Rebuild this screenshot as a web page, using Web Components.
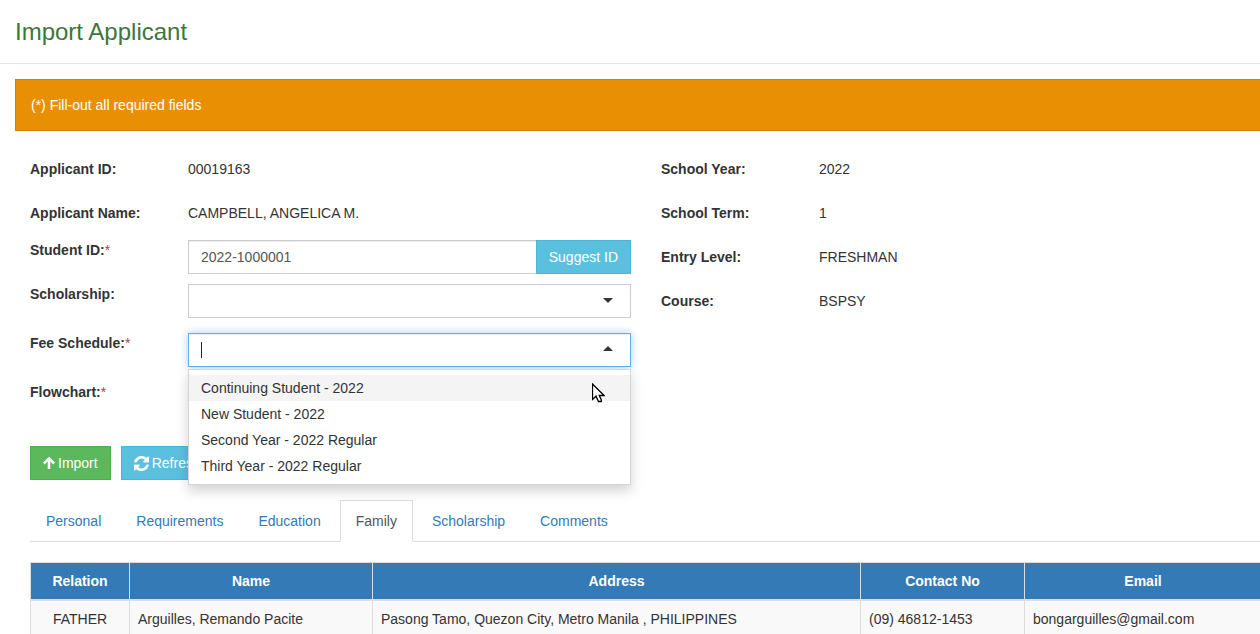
<!DOCTYPE html>
<html lang="en">
<head>
<meta charset="utf-8">
<title>Import Applicant</title>
<style>
  body { margin: 0; background: #fff; color: #333; font: 14px/20px "Liberation Sans", Arial, sans-serif; overflow-x: hidden; }
</style>
</head>
<body>
<import-page></import-page>

<script>
const BASE = `
  *, *::before, *::after { box-sizing: border-box; }
  :host { display: block; }
  input, select, button { font: inherit; color: inherit; margin: 0; border-radius: 0; }
`;
const FIELD = `
  :host { display: grid; grid-template-columns: 128px minmax(0, 1fr); gap: 30px; align-items: start; min-height: 34px; }
  .label { font-weight: bold; }
  .req { color: #a94442; font-weight: normal; }
`;
const CONTROL = `
  .control { display: block; width: 100%; height: 34px; padding: 6px 12px; border: 1px solid #ccc; background: #fff; color: #555; outline: 0; }
  .wrap { position: relative; }
  .caret { position: absolute; right: 18px; top: 14px; width: 10px; height: 5px; fill: #333; pointer-events: none; }
`;
function define(name, css, html) {
  customElements.define(name, class extends HTMLElement {
    connectedCallback() {
      if (this.shadowRoot) return;
      const root = this.attachShadow({ mode: "open" });
      root.innerHTML = `<style>${BASE}${css}</style>${typeof html === "function" ? html(this) : html}`;
    }
  });
}
const mark = el => el.hasAttribute("required") ? `<span class="req">*</span>` : "";

define("page-heading", `
  :host { padding: 15px; border-bottom: 1px solid #e5e5e5; }
  h1 { margin: 0; font-size: 24px; line-height: 33px; font-weight: normal; color: #3c763d; }
`, `<h1><slot></slot></h1>`);

define("alert-banner", `
  :host { padding: 15px; border: 1px solid #cc8109; background: #e88f04; color: #fff; }
`, `<slot></slot>`);

define("static-field", `${FIELD}
  .label, .value { padding-top: 7px; }
`, el => `<span class="label">${el.getAttribute("label")}</span><span class="value"><slot></slot></span>`);

define("id-field", `${FIELD}${CONTROL}
  .group { display: flex; }
  .control { flex: 1; min-width: 0; border-right: 0; box-shadow: inset 0 1px 1px rgba(0,0,0,.075); }
`, el => `
  <label class="label" for="f">${el.getAttribute("label")}${mark(el)}</label>
  <div class="group">
    <input id="f" class="control" type="text" value="${el.getAttribute("value")}">
    <action-button kind="info">Suggest ID</action-button>
  </div>`);

define("select-field", `${FIELD}${CONTROL}
  select { appearance: none; }
`, el => `
  <label class="label" for="f">${el.getAttribute("label")}${mark(el)}</label>
  <div class="wrap">
    <select id="f" class="control"><option></option></select>
    <svg class="caret" viewBox="0 0 10 5"><path d="M0 0h10L5 5z"/></svg>
  </div>`);

define("combo-field", `${FIELD}${CONTROL}
  .control { border-color: #66afe9; box-shadow: inset 0 1px 1px rgba(0,0,0,.075), 0 0 8px rgba(102,175,233,.6);
    background: linear-gradient(#222, #222) 12px 8px / 1px 16px no-repeat #fff; }
  .caret { top: 13px; }
  .menu { position: absolute; z-index: 5; top: 36px; left: 0; right: 0; margin: 0; padding: 5px 0; list-style: none;
    border: 1px solid #d5d5d5; background: #fff; box-shadow: 0 6px 12px rgba(0,0,0,.175); }
  .menu li { padding: 3px 12px; }
  .menu li[aria-selected=true] { background: #f4f4f4; }
  .pointer { position: absolute; z-index: 6; top: 50px; right: 26px; width: 13px; height: 20px; }
`, el => `
  <label class="label" for="f">${el.getAttribute("label")}${mark(el)}</label>
  <div class="wrap">
    <input id="f" class="control" type="text" role="combobox" aria-expanded="true" aria-controls="m">
    <svg class="caret" viewBox="0 0 10 5"><path d="M0 5h10L5 0z"/></svg>
    <ul id="m" class="menu" role="listbox">
      ${el.getAttribute("options").split("|").map((o, i) => `<li role="option" aria-selected="${i === 0}">${o}</li>`).join("")}
    </ul>
    <svg class="pointer" viewBox="0 0 13 20"><path d="M.5 1V16.5L4 13.2 6.5 18.5H9.3V17L7.3 12.5H12z" fill="#fff" stroke="#000" stroke-width="1.3"/></svg>
  </div>`);

const ICONS = {
  up: `<svg width="12" height="14" viewBox="0 0 12 14"><path d="M.9 7.5 6 2.4 11.1 7.5M6 3V13" fill="none" stroke="#fff" stroke-width="2.5"/></svg>`,
  refresh: `<svg width="15" height="15" viewBox="128 128 1536 1536"><path fill="#fff" stroke="#fff" stroke-width="30" d="M1639 1056q0 5-1 7-64 268-268 434.5t-478 166.5q-146 0-282.5-55t-243.5-157l-129 129q-19 19-45 19t-45-19-19-45v-448q0-26 19-45t45-19h448q26 0 45 19t19 45-19 45l-137 137q71 66 161 102t187 36q134 0 250-65t186-179q11-17 53-117 8-23 30-23h192q13 0 22.5 9.5t9.5 22.5zm25-800v448q0 26-19 45t-45 19h-448q-26 0-45-19t-19-45 19-45l138-138q-148-137-349-137-134 0-250 65t-186 179q-11 17-53 117-8 23-30 23h-199q-13 0-22.5-9.5t-9.5-22.5v-7q65-268 270-434.5t480-166.5q146 0 284 55.5t245 156.5l130-129q19-19 45-19t45 19 19 45z"/></svg>`
};
define("action-button", `
  button { display: flex; align-items: center; gap: 3px; height: 34px; padding: 6px 12px; color: #fff;
    border: 1px solid #46b8da; background: #5bc0de; white-space: nowrap; }
  :host([kind=success]) button { border-color: #4cae4c; background: #5cb85c; }
`, el => `<button type="button">${ICONS[el.getAttribute("icon")] || ""}<slot></slot></button>`);

define("tab-strip", `
  nav { display: flex; gap: 3px; border-bottom: 1px solid #ddd; }
  a { margin-bottom: -1px; padding: 10px 15px; border: 1px solid transparent; color: #337ab7; text-decoration: none; }
  a[aria-current] { color: #555; background: #fff; border-color: #ddd #ddd #fff; }
`, el => `<nav>${el.getAttribute("tabs").split("|").map(t =>
  `<a href="#${t.toLowerCase()}"${t === el.getAttribute("active") ? ` aria-current="page"` : ""}>${t}</a>`).join("")}</nav>`);

define("family-table", `
  table { width: 100%; table-layout: fixed; border-collapse: separate; border-spacing: 0; border: solid #ddd; border-width: 1px 0 0 1px; }
  th, td { padding: 8px; border-right: 1px solid #ddd; text-align: left; }
  th { background: #337ab7; color: #fff; text-align: center; border-bottom: 2px solid #ddd; }
  td { background: #f9f9f9; border-bottom: 1px solid #ddd; }
  td:first-child { text-align: center; }
  .relation { width: 99px; } .name { width: 243px; } .contact { width: 164px; } .email { width: 237px; }
`, `<table>
  <colgroup><col class="relation"><col class="name"><col><col class="contact"><col class="email"></colgroup>
  <thead><tr><th>Relation</th><th>Name</th><th>Address</th><th>Contact No</th><th>Email</th></tr></thead>
  <tbody><tr><td>FATHER</td><td>Arguilles, Remando Pacite</td><td>Pasong Tamo, Quezon City, Metro Manila , PHILIPPINES</td><td>(09) 46812-1453</td><td>bongarguilles@gmail.com</td></tr></tbody>
</table>`);

define("import-page", `
  :host { overflow: hidden; }
  main { width: calc(100% + 32px); padding: 15px; }
  .body { padding: 21px 15px 0; }
  .columns { display: grid; grid-template-columns: minmax(0, 1fr) minmax(0, 1fr); gap: 30px; }
  .stack { display: flex; flex-direction: column; gap: 10px; }
  .roomy { display: flex; flex-direction: column; gap: 15px; }
  .actions { display: flex; gap: 10px; padding: 30px 0 20px; }
  tab-strip { margin-bottom: 20px; }
`, `
  <page-heading>Import Applicant</page-heading>
  <main>
    <alert-banner>(*) Fill-out all required fields</alert-banner>
    <div class="body">
      <div class="columns">
        <div class="stack">
          <static-field label="Applicant ID:">00019163</static-field>
          <static-field label="Applicant Name:">CAMPBELL, ANGELICA M.</static-field>
          <id-field label="Student ID:" value="2022-1000001" required></id-field>
          <div class="roomy">
            <select-field label="Scholarship:"></select-field>
            <combo-field label="Fee Schedule:" required options="Continuing Student - 2022|New Student - 2022|Second Year - 2022 Regular|Third Year - 2022 Regular"></combo-field>
            <select-field label="Flowchart:" required></select-field>
          </div>
        </div>
        <div class="stack">
          <static-field label="School Year:">2022</static-field>
          <static-field label="School Term:">1</static-field>
          <static-field label="Entry Level:">FRESHMAN</static-field>
          <static-field label="Course:">BSPSY</static-field>
        </div>
      </div>
      <div class="actions">
        <action-button kind="success" icon="up">Import</action-button>
        <action-button kind="info" icon="refresh">Refresh</action-button>
      </div>
      <tab-strip tabs="Personal|Requirements|Education|Family|Scholarship|Comments" active="Family"></tab-strip>
      <family-table></family-table>
    </div>
  </main>
`);
</script>
</body>
</html>
